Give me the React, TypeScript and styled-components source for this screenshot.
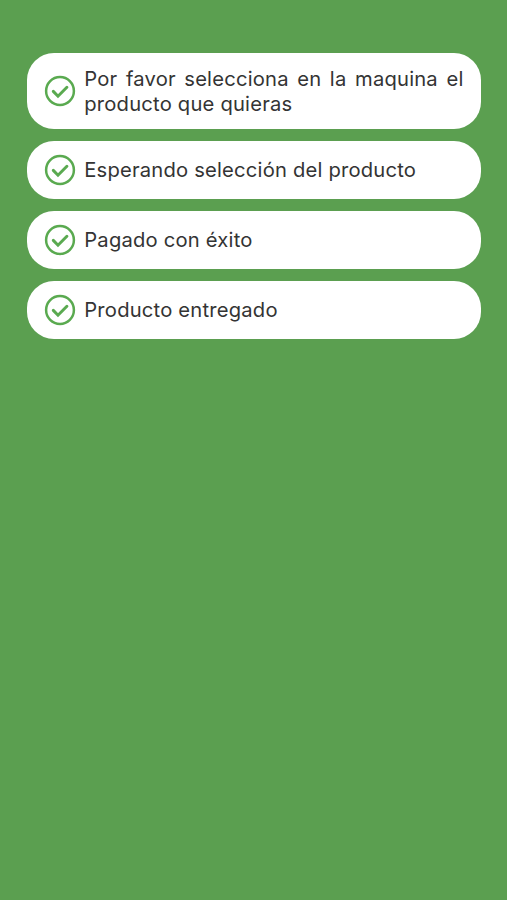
import React from "react";
import styled, { createGlobalStyle } from "styled-components";

const GlobalStyle = createGlobalStyle`
  * { box-sizing: border-box; }
  body { margin: 0; background: #5b9f50; }
`;

const Screen = styled.main`
  min-height: 900px;
  padding: 53.4px 26px 0 26.6px;
  background: #5b9f50;
  font-family: Inter, "Liberation Sans", sans-serif;
`;

const StatusList = styled.ul`
  display: flex;
  flex-direction: column;
  gap: 12.7px;
  margin: 0;
  padding: 0;
  list-style: none;
`;

const StatusCard = styled.li<{ $tall?: boolean }>`
  display: flex;
  align-items: center;
  gap: 8.7px;
  height: ${({ $tall }) => ($tall ? 75.2 : 57.3)}px;
  padding: 0 17.5px 0 17px;
  border-radius: 27px;
  background: #fff;
`;

const StatusIcon = styled.svg`
  flex: none;
  width: 32px;
  height: 32px;
`;

const StatusText = styled.p`
  flex: 1;
  margin: 0;
  color: #343434;
  font-size: 20.2px;
  line-height: 25px;
  letter-spacing: 0.2px;
  text-align: justify;
`;

const steps = [
  { text: "Por favor selecciona en la maquina el producto que quieras", tall: true },
  { text: "Esperando selección del producto" },
  { text: "Pagado con éxito" },
  { text: "Producto entregado" },
];

function CheckIcon() {
  return (
    <StatusIcon viewBox="0 0 32 32" fill="none" stroke="#5aaa50" aria-hidden="true">
      <circle cx="16" cy="16" r="13.9" strokeWidth="2.5" />
      <path
        d="M9.3 16.4l4.7 4.8 8.9-8.9"
        strokeWidth="3"
        strokeLinecap="round"
      />
    </StatusIcon>
  );
}

export default function App() {
  return (
    <>
      <GlobalStyle />
      <Screen>
        <StatusList>
          {steps.map(({ text, tall }) => (
            <StatusCard key={text} $tall={tall}>
              <CheckIcon />
              <StatusText>{text}</StatusText>
            </StatusCard>
          ))}
        </StatusList>
      </Screen>
    </>
  );
}
